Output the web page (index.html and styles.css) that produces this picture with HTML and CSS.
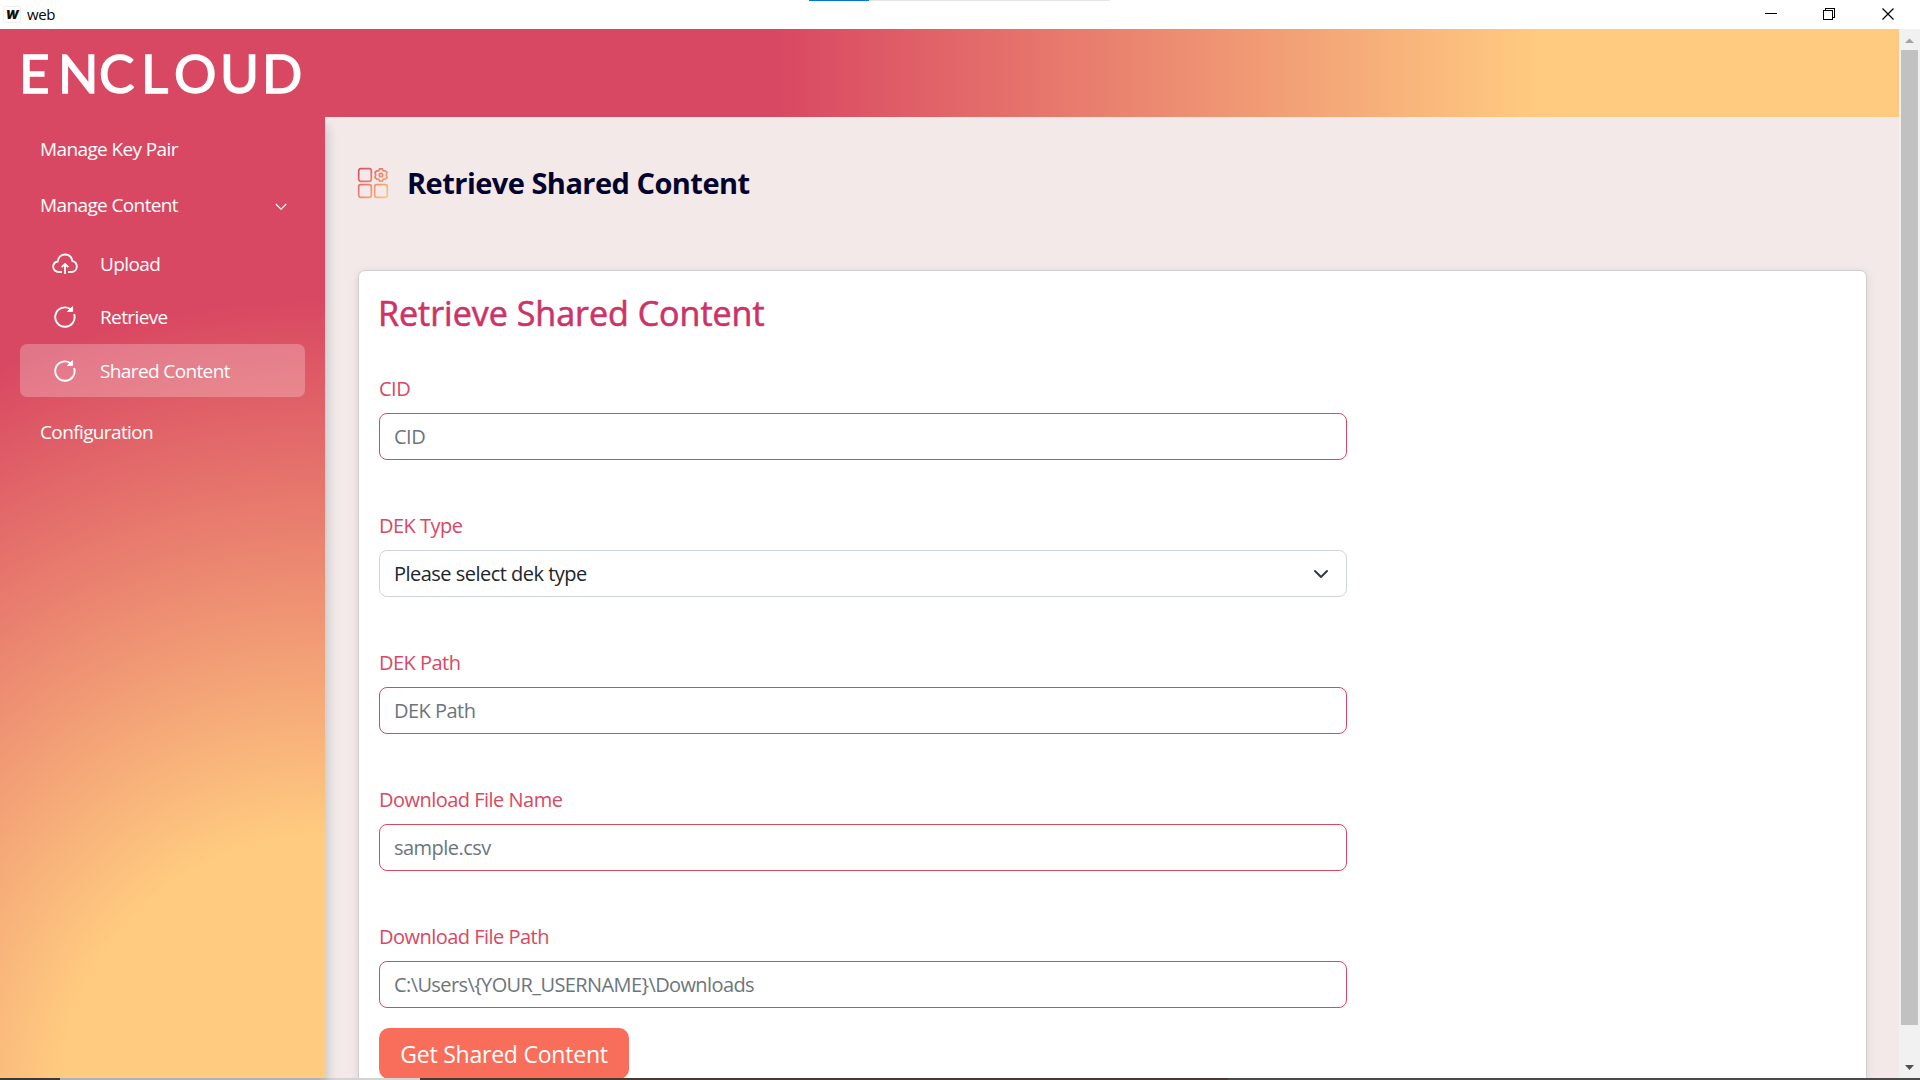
FILE: index.html
```html
<!DOCTYPE html>
<html lang="en">
<head>
<meta charset="utf-8">
<title>web</title>
<link rel="stylesheet" href="styles.css">
</head>
<body>
<div class="window">
  <div class="titlebar">
    <span class="app-icon">W</span>
    <span class="app-name">web</span>
    <div class="loader"><div class="loader-fill"></div></div>
    <svg class="controls" width="160" height="29" fill="none" stroke="#000" shape-rendering="crispEdges">
      <path d="M5 13.5h12M63.500 10.500h9v9h-9zM65.500 10.500v-2h9v9h-2"/>
      <path d="M122.500 8.500l11 11M133.500 8.500l-11 11" shape-rendering="auto" stroke-width="1.200"/>
    </svg>
  </div>
  <div class="view">
    <div class="page">
      <header class="header">
        <div class="logo"><span>E</span><span>N</span><span>C</span><span>L</span><span>O</span><span>U</span><span>D</span></div>
      </header>
      <div class="body">
        <nav class="sidebar">
          <a class="item"><span>Manage Key Pair</span></a>
          <a class="item"><span>Manage Content</span>
            <svg class="chevron" width="12" height="8" fill="none" stroke="#fff" stroke-width="1.200"><path d="M.8 1l5.200 5.200L11.200 1"/></svg>
          </a>
          <div class="submenu">
            <a class="sub"><svg width="26" height="22" viewBox="0 0 26 22" fill="none" stroke="#fff" stroke-width="1.800"><path d="M10 19H7C3.700 19 1.200 16.800 1.200 13.700c0-2.800 1.900-4.700 4.500-5.200C6.200 4.500 9.200 1.500 13 1.500s6.700 2.600 7.300 6.400c2.700.7 4.500 2.900 4.500 5.700 0 3.200-2.500 5.400-5.600 5.400H16M13 21V11.500M9.700 14.200l3.300-3.300 3.300 3.300"/></svg><span>Upload</span></a>
            <a class="sub"><svg width="26" height="22" viewBox="0.700 0.300 26 22" fill="none" stroke="#fff" stroke-width="1.900"><path d="M22.800 8.300A9.700 9.700 0 1 1 18.600 3.100L20.500 5"/><path d="M16 5.800h5.300V.800z" fill="#fff" stroke-width=".8"/></svg><span>Retrieve</span></a>
            <a class="sub active"><svg width="26" height="22" viewBox="0.700 0.300 26 22" fill="none" stroke="#fff" stroke-width="1.900"><path d="M22.800 8.300A9.700 9.700 0 1 1 18.600 3.100L20.500 5"/><path d="M16 5.800h5.300V.800z" fill="#fff" stroke-width=".8"/></svg><span>Shared Content</span></a>
          </div>
          <a class="item config"><span>Configuration</span></a>
        </nav>
        <main class="main">
          <div class="heading">
            <svg width="32" height="32" viewBox="0 0 32 32" fill="none" stroke="url(#warm)" stroke-width="1.700">
              <defs><linearGradient id="warm" gradientUnits="userSpaceOnUse" x1="1" y1="1" x2="31" y2="31"><stop offset="0" stop-color="#d94862"/><stop offset="1" stop-color="#ffcb80"/></linearGradient></defs>
              <rect x="1.700" y="1.700" width="12.600" height="12.600" rx="2"/><rect x="1.700" y="17.700" width="12.600" height="12.600" rx="2"/><rect x="17.700" y="17.700" width="12.600" height="12.600" rx="2"/>
              <path d="M22.600 1.800h2.800l.7 1.900 2 .2 1.900 1.500-.7 2.600.7 2.600-1.900 1.500-2 .2-.7 1.900h-2.800l-.7-1.900-2-.2-1.900-1.500.7-2.600-.7-2.600 1.900-1.500 2-.2z"/><circle cx="24" cy="8" r="1.700"/>
            </svg>
            <h1>Retrieve Shared Content</h1>
          </div>
          <section class="card">
            <h2>Retrieve Shared Content</h2>
            <div class="field"><label>CID</label><div class="input">CID</div></div>
            <div class="field"><label>DEK Type</label><div class="input select"><span>Please select dek type</span>
              <svg width="16" height="12" fill="none" stroke="#343a40" stroke-width="2" stroke-linecap="round" stroke-linejoin="round"><path d="M2 3l6 6 6-6"/></svg></div></div>
            <div class="field"><label>DEK Path</label><div class="input">DEK Path</div></div>
            <div class="field"><label>Download File Name</label><div class="input">sample.csv</div></div>
            <div class="field"><label>Download File Path</label><div class="input path">C:\Users\{YOUR_USERNAME}\Downloads</div></div>
            <button class="submit">Get Shared Content</button>
          </section>
        </main>
      </div>
    </div>
    <div class="scrollbar">
      <svg width="21" height="21"><path d="M6 14h9L10.500 9.500z" fill="#a3a3a3"/></svg>
      <div class="thumb"></div>
      <svg width="21" height="21"><path d="M6 8h9l-4.500 5z" fill="#505050"/></svg>
    </div>
  </div>
  <div class="edge"><i class="dark"></i><i class="light"></i><i class="brown"></i><i class="rest"></i></div>
</div>
</body>
</html>
```
FILE: styles.css
```css
* { box-sizing: border-box; }
body { margin: 0; font-family: "Open Sans", "Noto Sans", sans-serif; overflow: hidden; }
.window { width: 1920px; height: 1080px; display: flex; flex-direction: column; background: #fff; }
.titlebar { height: 29px; flex: none; display: flex; align-items: center; position: relative; padding-left: 3px; font-size: 15px; letter-spacing: -.4px; color: #000; }
.app-icon { width: 18px; height: 17px; border: 1px solid #eee; border-radius: 3px; font: italic 900 12px/15px Inter, sans-serif; text-align: center; color: #111; }
.app-name { margin-left: 6px; padding-bottom: 1px; }
.controls { margin-left: auto; }
.loader { position: absolute; left: 809px; top: 0; width: 301px; height: 1px; background: #e6e6e6; }
.loader-fill { width: 60px; height: 1px; background: #0078d7; }
.view { flex: 1; min-height: 0; display: flex; }
.page { flex: 1; display: flex; flex-direction: column; min-width: 0; }
.header { height: 88px; flex: none; background: linear-gradient(90deg, #d94862 0, #d94862 41%, #ffcb80 81%); }
/* one column per letter of the wordmark */
.logo { display: grid; grid-template-columns: 39px 41px 42px 33px 46px 42px 44px; padding: 12px 0 0 19px; font: 53px/64px Lato, sans-serif; color: #fff; -webkit-text-stroke: 1.4px #fff; }
.body { flex: 1; min-height: 0; display: flex; }
.sidebar { width: 325px; flex: none; padding: 4px 20px; color: #fff; font-size: 19px; letter-spacing: -.62px; background: radial-gradient(circle at 325px 983px, #ffcb80 0, #ffcb80 265px, #d94862 800px); box-shadow: 2px 10px 10px rgba(20, 60, 80, .22); z-index: 1; }
.item { height: 56px; padding: 0 18px 0 20px; display: flex; align-items: center; justify-content: space-between; }
.chevron { margin-top: 4px; }
.submenu { padding-top: 4px; }
.sub { height: 53px; margin-bottom: .5px; display: flex; align-items: center; padding-left: 32px; border-radius: 7px; }
.sub span { margin-left: 22px; }
.active { background: rgba(255, 255, 255, .25); }
.config { margin-top: 7px; }
.main { flex: 1; min-width: 0; padding: 45px 32px 0 33px; background: #f2e9e8; overflow: hidden; }
.heading { height: 42px; display: flex; align-items: center; gap: 18px; }
.heading svg { margin-left: -1px; }
h1, h2 { margin: 0; white-space: nowrap; }
h1 { font-size: 29px; line-height: 40px; letter-spacing: -.53px; color: #03032e; }
.card { margin-top: 66px; height: 900px; padding: 19px 20px; background: #fff; border: 1px solid #cfcfd2; border-radius: 7px; box-shadow: 0 2px 8px rgba(0, 0, 0, .1); }
h2 { margin-left: -1px; font-size: 34px; line-height: 46px; font-weight: 400; color: #cc3366; -webkit-text-stroke: .6px #cc3366; }
.field { width: 968px; height: 137px; padding-top: 38px; font-size: 20px; letter-spacing: -.52px; }
.field label { display: block; height: 39px; line-height: 30px; color: #d94862; }
.input { height: 47px; padding: 0 14px; display: flex; align-items: center; justify-content: space-between; border: 1px solid #d94862; border-radius: 8px; color: #6c757d; }
.path { letter-spacing: -.6px; }
.select { border-color: #ced4da; color: #212529; padding-right: 17px; }
.submit { display: block; width: 250px; height: 51px; margin-top: 7px; border: 0; border-radius: 10px; background: #f96e5b; color: #fff; font: 23px "Open Sans", sans-serif; letter-spacing: -.22px; padding: 0; white-space: nowrap; }
.scrollbar { width: 21px; flex: none; display: flex; flex-direction: column; background: #f1f1f1; }
.scrollbar svg { flex: none; }
.thumb { width: 17px; margin: 0 2px; height: 975px; background: #c1c1c1; }
.scrollbar svg:last-child { margin-top: auto; }
.edge { height: 2px; flex: none; display: flex; }
.dark { width: 60px; background: #453a30; }
.light { width: 360px; background: #d4d4d4; }
.brown { width: 808px; background: #4a3833; }
.rest { flex: 1; background: #4a4a4a; }
```
